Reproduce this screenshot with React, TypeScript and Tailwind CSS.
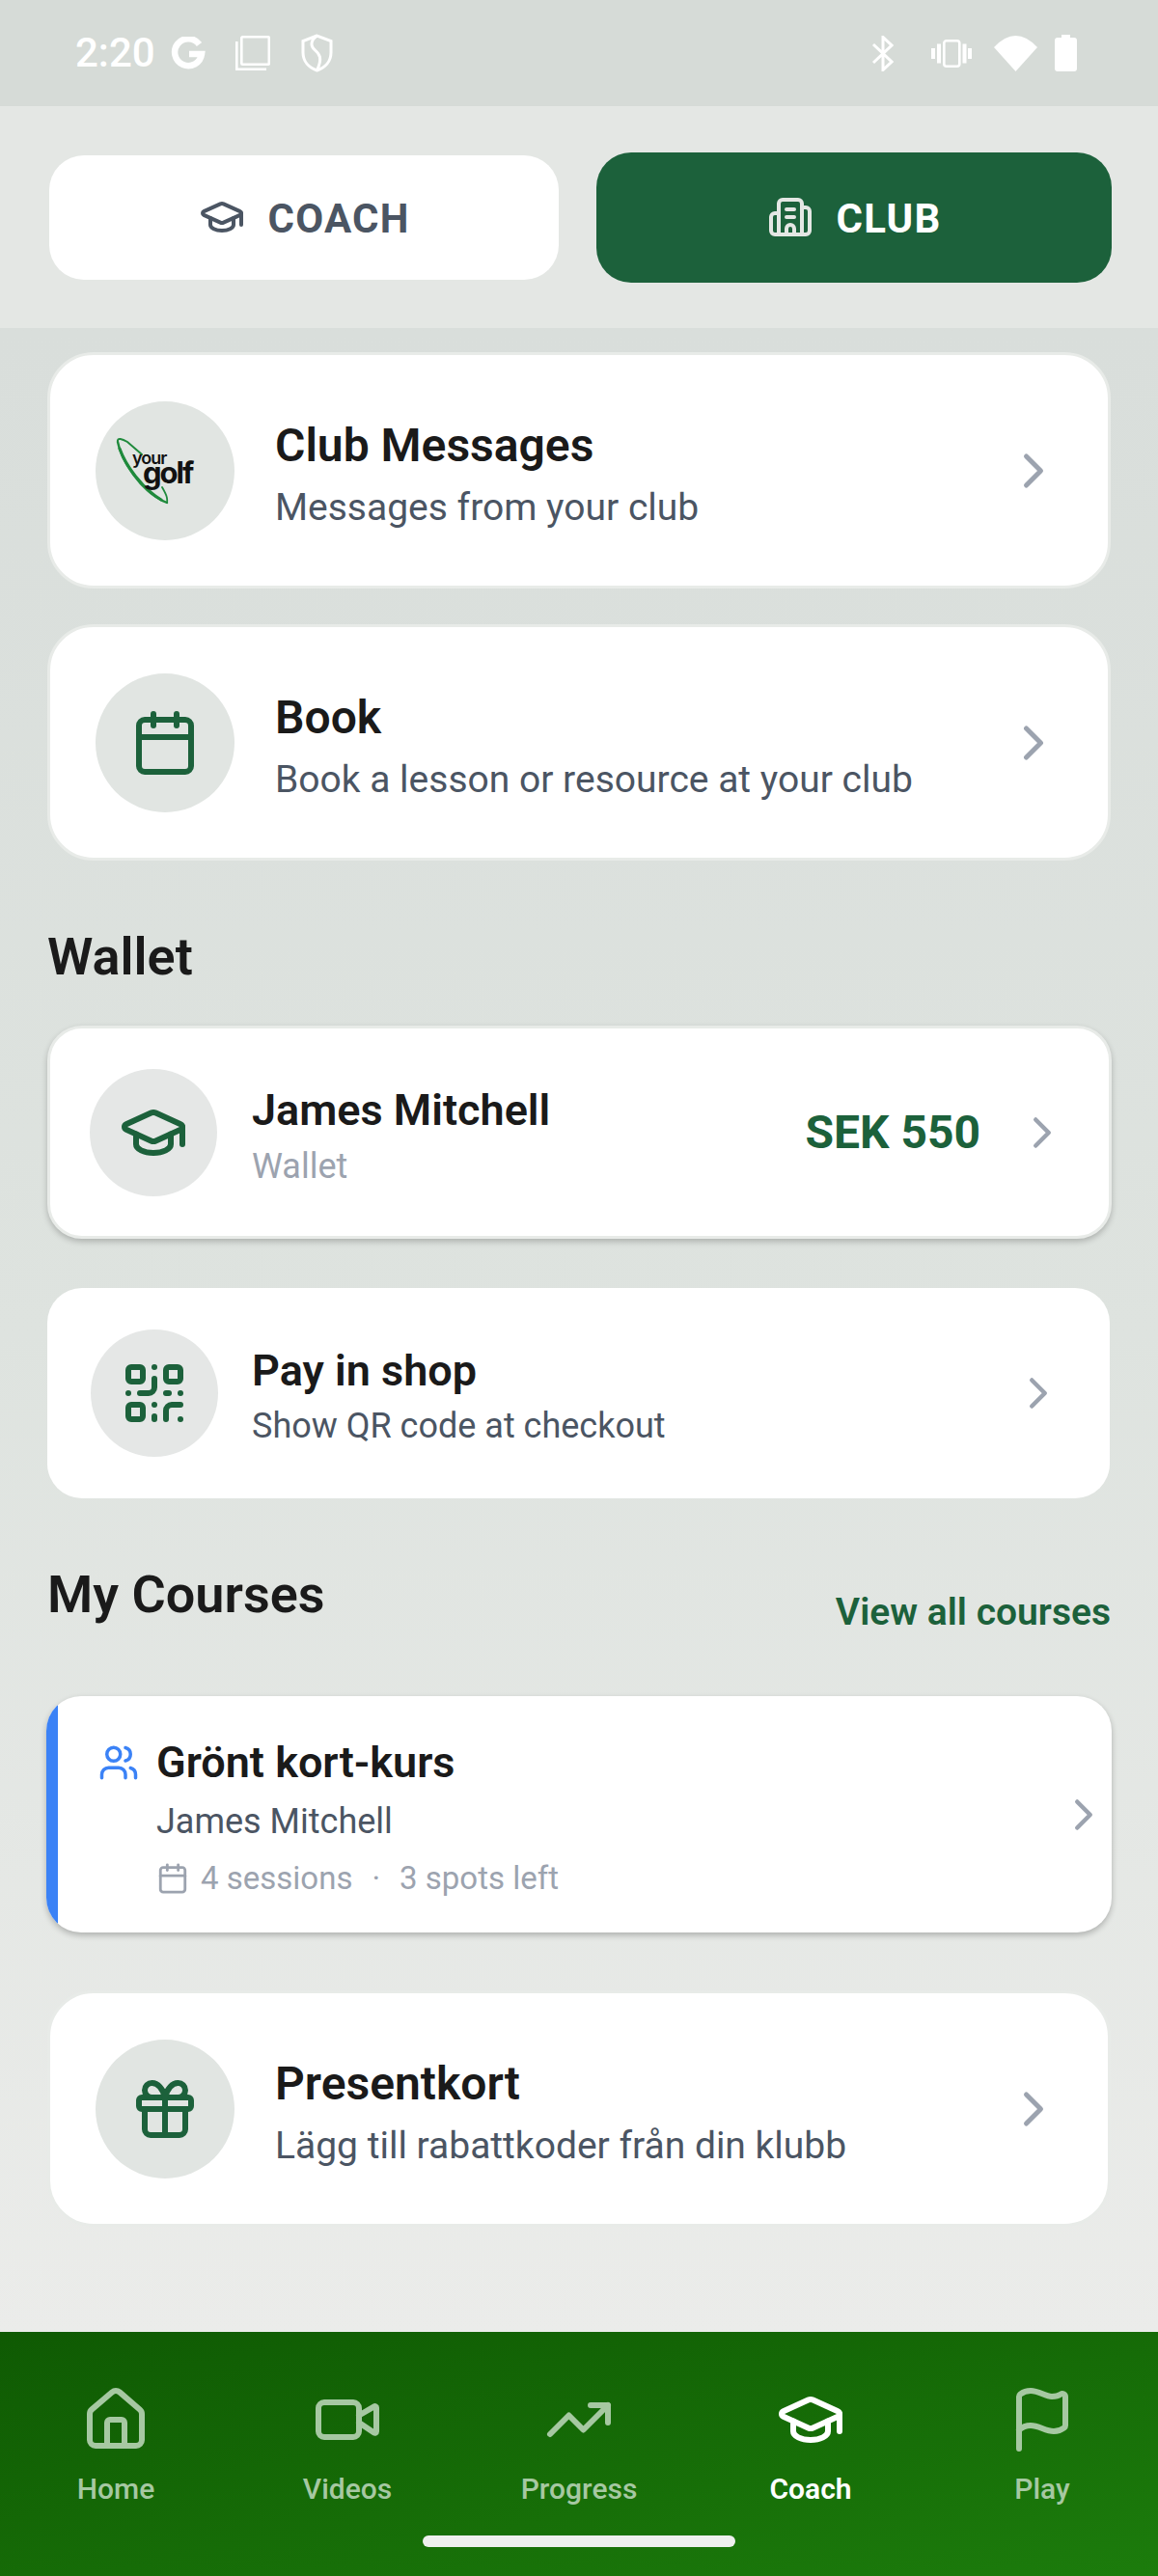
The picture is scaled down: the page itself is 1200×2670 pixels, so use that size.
import {
  Building2,
  Calendar,
  ChevronRight,
  Flag,
  Gift,
  GraduationCap,
  House,
  QrCode,
  TrendingUp,
  Users,
  Video,
} from "lucide-react";
import type { ReactNode } from "react";

const GREEN = "text-[#1c613b]";

function StatusBar() {
  return (
    <div className="h-[110px] shrink-0 bg-[#d6dbd7] flex items-center justify-between pl-[78px] pr-[84px] text-white">
      <div className="flex items-center">
        <span className="text-[42px] leading-[50px] font-medium">2:20</span>
        <svg width="37" height="35" viewBox="0 0 37 35" className="ml-[16px]" fill="none" stroke="white" strokeWidth="6.5">
          <path d="M29.500 8A14 14 0 1 0 32 18H19" />
        </svg>
        <svg width="36" height="36" viewBox="0 0 36 36" className="ml-[30px]" fill="none" stroke="white" strokeWidth="2.600">
          <rect x="6.300" y="1.300" width="28.500" height="28.500" rx="1" />
          <path d="M1.300 6v28.700H32" />
        </svg>
        <svg width="33" height="40" viewBox="0 0 33 40" className="ml-[32px]" fill="none" stroke="white" strokeWidth="3">
          <path d="M16.500 2 2 7.500v12c0 9 6 15.500 14.500 18.500C25 35 31 28.500 31 19.500v-12z" />
          <path d="M16.500 2c-7 5-7 11-2 15 4.500 4 8 8 2 21" />
        </svg>
      </div>
      <div className="flex items-center">
        <svg width="23" height="37" viewBox="0 0 23 37" fill="none" stroke="white" strokeWidth="3">
          <path d="M2 9 21 27l-9 8.500V1.500L21 10 2 28" />
        </svg>
        <svg width="42" height="29" viewBox="0 0 42 29" className="ml-[39px]" fill="white">
          <rect x="13.300" y="1.300" width="16" height="26.400" rx="2.500" fill="none" stroke="white" strokeWidth="2.600" />
          <rect x="6" y="4.500" width="4" height="20" />
          <rect x="0" y="9" width="4" height="11" />
          <rect x="32.500" y="4.500" width="4" height="20" />
          <rect x="38" y="9" width="4" height="11" />
        </svg>
        <svg width="45" height="37" viewBox="0 0 45 37" className="ml-[23px]" fill="white">
          <path d="M22.500 37 0 12Q22.500-12 45 12z" />
        </svg>
        <svg width="23" height="38" viewBox="0 0 23 38" className="ml-[18px]" fill="white">
          <path d="M7 0h9v3h4a3 3 0 0 1 3 3v29a3 3 0 0 1-3 3H3a3 3 0 0 1-3-3V6a3 3 0 0 1 3-3h4z" />
        </svg>
      </div>
    </div>
  );
}

function TopTabs() {
  return (
    <div className="h-[230px] shrink-0 bg-[#e4e7e4] flex items-center pl-[51px] pr-[48px] gap-[39px] font-bold text-[42px] tracking-[1.2px]">
      <div className="w-[528px] h-[129px] bg-white rounded-[36px] flex items-center justify-center gap-[24px] text-[#4b5563]">
        <GraduationCap size={48} strokeWidth={2} />
        <span className="mt-[3px]">COACH</span>
      </div>
      <div className="w-[534px] h-[135px] bg-[#1c613b] rounded-[36px] flex items-center justify-center gap-[24px] text-white">
        <Building2 size={48} strokeWidth={2} className="text-[#e4e7e4]" />
        <span className="mt-[3px]">CLUB</span>
      </div>
    </div>
  );
}

function BigCard({ icon, title, sub }: { icon: ReactNode; title: string; sub: string }) {
  return (
    <div className="h-[245px] mx-[49px] bg-white rounded-[48px] border-[3px] border-[#e8ebe8] flex items-center pl-[47px] pr-[47px]">
      <div className="w-[144px] h-[144px] rounded-full bg-[#e1e5e2] flex items-center justify-center shrink-0">{icon}</div>
      <div className="ml-[42px] flex-1 mt-[9px]">
        <div className="text-[48px] leading-[60px] font-semibold text-[#1a1a1a]">{title}</div>
        <div className="text-[39px] leading-[52px] text-[#4b5563] mt-[8px]">{sub}</div>
      </div>
      <ChevronRight size={60} strokeWidth={2} className="text-[#9ca3af] shrink-0" />
    </div>
  );
}

function YourGolfLogo() {
  return (
    <svg width="112" height="76" viewBox="0 0 112 76">
      <g fill="none" stroke="#1f8a3c" strokeLinecap="round">
        <path d="M7 8C6 3 12 5 17 8L32 21" strokeWidth="2" />
        <path d="M7 8C10 25 30 60 58 71" strokeWidth="2.400" />
        <path d="M9 15C15 32 32 56 52 68" strokeWidth="3" />
        <path d="M53 55C57 62 59 66 58 71" strokeWidth="1.800" />
      </g>
      <text x="22" y="31" fontFamily="Inter, sans-serif" fontSize="18" fontWeight="600" letterSpacing="-1" fill="#111111">your</text>
      <text x="33" y="51" fontFamily="Inter, sans-serif" fontSize="31" fontWeight="700" letterSpacing="-2" fill="#111111">golf</text>
    </svg>
  );
}

function WalletCard({ icon, title, sub, amount }: { icon: ReactNode; title: string; sub: string; amount: string }) {
  return (
    <div className="h-[221px] ml-[49px] mr-[48px] bg-white rounded-[36px] flex items-center pl-[41px] pr-[42px] border-[3px] border-[#e8ebe8] shadow-[0_3px_6px_rgba(0,0,0,0.22)]">
      <div className="w-[132px] h-[132px] rounded-full bg-[#e5e7e6] flex items-center justify-center shrink-0">{icon}</div>
      <div className="ml-[36px] flex-1 mt-[7px]">
        <div className="text-[45px] leading-[56px] font-semibold text-[#1a1a1a]">{title}</div>
        <div className="text-[36px] leading-[46px] mt-[7px] text-[#9ca3af]">{sub}</div>
      </div>
      <div className={`text-[48px] font-bold mr-[37px] ${GREEN}`}>{amount}</div>
      <ChevronRight size={54} strokeWidth={2} className="text-[#9ca3af] shrink-0" />
    </div>
  );
}

function ShopCard({ icon, title, sub }: { icon: ReactNode; title: string; sub: string }) {
  return (
    <div className="h-[218px] ml-[49px] mr-[50px] bg-white rounded-[36px] flex items-center pl-[45px] pr-[47px]">
      <div className="w-[132px] h-[132px] rounded-full bg-[#e5e7e6] flex items-center justify-center shrink-0">{icon}</div>
      <div className="ml-[35px] flex-1 mt-[5px]">
        <div className="text-[45px] leading-[56px] font-semibold text-[#1a1a1a]">{title}</div>
        <div className="text-[36px] leading-[46px] mt-[6px] text-[#4b5563]">{sub}</div>
      </div>
      <ChevronRight size={54} strokeWidth={2} className="text-[#9ca3af] shrink-0" />
    </div>
  );
}

function CourseCard() {
  return (
    <div className="h-[245px] mx-[48px] bg-white rounded-[36px] overflow-hidden shadow-[0_3px_6px_rgba(0,0,0,0.24)] flex items-center pr-[2px]">
      <div className="w-[12px] self-stretch bg-[#3b82f6] shrink-0" />
      <div className="flex-1 flex pl-[42px] mt-[5px]">
        <Users size={42} strokeWidth={2} className="text-[#3b82f6] mt-[7px] shrink-0" />
        <div className="ml-[18px]">
          <div className="text-[45px] leading-[56px] font-semibold text-[#1a1a1a]">Grönt kort-kurs</div>
          <div className="text-[36px] leading-[46px] text-[#4b5563] mt-[10px]">James Mitchell</div>
          <div className="flex items-center text-[#9ca3af] text-[33px] leading-[42px] mt-[15px]">
            <Calendar size={34} strokeWidth={2} />
            <span className="ml-[12px]">4 sessions</span>
            <span className="mx-[20px]">·</span>
            <span>3 spots left</span>
          </div>
        </div>
      </div>
      <ChevronRight size={54} strokeWidth={2} className="text-[#9ca3af] shrink-0" />
    </div>
  );
}

function Content() {
  return (
    <div className="flex-1 bg-gradient-to-b from-[#d9dedb] via-[#dee3df] to-[#ebecea]">
      <div className="pt-[25px] flex flex-col gap-[37px]">
        <BigCard icon={<YourGolfLogo />} title="Club Messages" sub="Messages from your club" />
        <BigCard icon={<Calendar size={72} strokeWidth={2} className={GREEN} />} title="Book" sub="Book a lesson or resource at your club" />
      </div>
      <div className="mt-[70px] ml-[49px] text-[54px] leading-[60px] font-semibold text-[#1a1a1a]">Wallet</div>
      <div className="mt-[41px] flex flex-col gap-[51px]">
        <WalletCard icon={<GraduationCap size={72} strokeWidth={2} className={GREEN} />} title="James Mitchell" sub="Wallet" amount="SEK 550" />
        <ShopCard icon={<QrCode size={72} strokeWidth={2} className={GREEN} />} title="Pay in shop" sub="Show QR code at checkout" />
      </div>
      <div className="mt-[69px] mx-[49px] flex items-end justify-between">
        <div className="text-[54px] leading-[62px] font-semibold text-[#1a1a1a]">My Courses</div>
        <div className={`text-[39px] font-semibold leading-[46px] mb-[-10px] ${GREEN}`}>View all courses</div>
      </div>
      <div className="mt-[74px]">
        <CourseCard />
      </div>
      <div className="mt-[60px]">
        <BigCard icon={<Gift size={72} strokeWidth={2} className={GREEN} />} title="Presentkort" sub="Lägg till rabattkoder från din klubb" />
      </div>
    </div>
  );
}

const NAV = [
  { label: "Home", Icon: House },
  { label: "Videos", Icon: Video },
  { label: "Progress", Icon: TrendingUp },
  { label: "Coach", Icon: GraduationCap, active: true },
  { label: "Play", Icon: Flag },
];

function BottomNav() {
  return (
    <div className="h-[253px] shrink-0 bg-gradient-to-br from-[#0f5a03] to-[#1c7c0c] flex flex-col items-center">
      <div className="grid grid-cols-5 w-full pt-[55px]">
        {NAV.map(({ label, Icon, active }) => (
          <div key={label} className={`flex flex-col items-center ${active ? "text-white font-semibold" : "text-[#a6c8a2] font-medium"}`}>
            <Icon size={72} strokeWidth={2} />
            <span className="text-[30px] leading-[38px] mt-[17px]">{label}</span>
          </div>
        ))}
      </div>
      <div className="w-[324px] h-[12px] rounded-full bg-[#eef0ee] mt-[29px]" />
    </div>
  );
}

export default function App() {
  return (
    <div className="w-[1200px] h-[2670px] flex flex-col overflow-hidden font-['Roboto',sans-serif]">
      <StatusBar />
      <TopTabs />
      <Content />
      <BottomNav />
    </div>
  );
}
